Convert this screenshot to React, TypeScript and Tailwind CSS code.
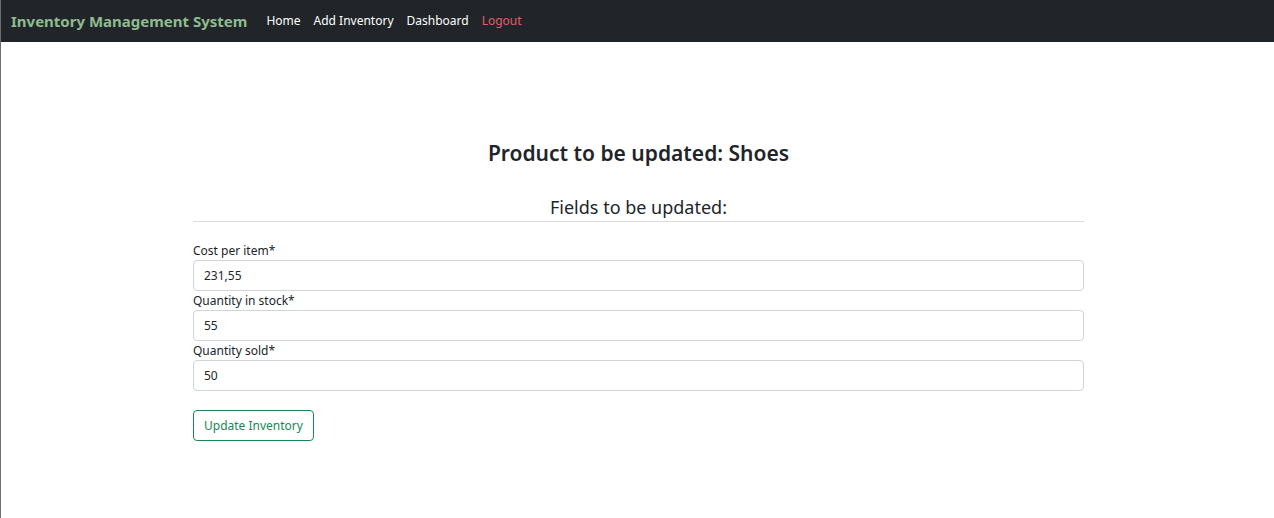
const fields = [
  { label: 'Cost per item*', value: '231,55' },
  { label: 'Quantity in stock*', value: '55' },
  { label: 'Quantity sold*', value: '50' },
];

const App = () => {
  return (
    <div className="min-h-[518px] border-l border-[#6e6e6e] bg-white pl-[2px] font-['Noto_Sans',sans-serif] text-[#212529]">
      <nav className="-ml-[2px] flex h-[42px] items-center bg-[#212529] pl-[10px]">
        <span className="mr-[19px] text-[15px] font-bold text-[#8fbc8f]">Inventory Management System</span>
        <ul className="flex gap-[13px] text-[12px]">
          <li className="text-white">Home</li>
          <li className="text-white">Add Inventory</li>
          <li className="text-white">Dashboard</li>
          <li className="text-[#e35d6a]">Logout</li>
        </ul>
      </nav>

      <main className="mx-auto w-[891px] pt-[96px]">
        <h2 className="text-center text-[21px] font-semibold leading-[30px]">Product to be updated: Shoes</h2>
        <h3 className="mt-[26px] text-center text-[18px] leading-[26px]">Fields to be updated:</h3>
        <hr className="mt-[1px] border-[#dcdcdc]" />

        <form className="mt-[19px] flex flex-col">
          {fields.map((f) => (
            <div key={f.label} className="flex flex-col">
              <label className="text-[12px] leading-[19px]">{f.label}</label>
              <input
                readOnly
                value={f.value}
                className="h-[31px] rounded-[4px] border border-[#ced4da] px-[10px] text-[12px] text-[#212529] outline-none"
              />
            </div>
          ))}
          <div className="mt-[19px]">
            <button
              type="button"
              className="h-[31px] rounded-[4px] border border-[#198754] px-[10px] text-[12px] text-[#198754]"
            >
              Update Inventory
            </button>
          </div>
        </form>
      </main>
    </div>
  );
};

export default App;
